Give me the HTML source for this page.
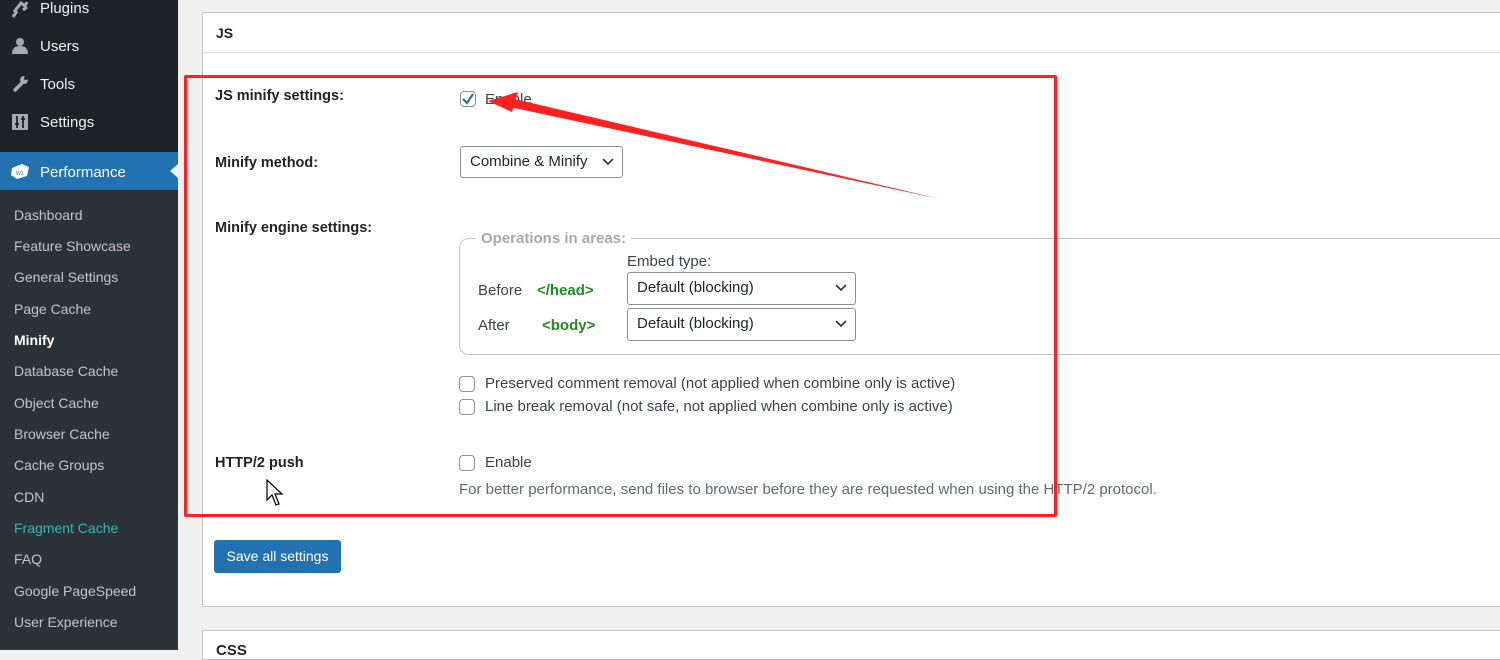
<!DOCTYPE html>
<html><head><style>
*{margin:0;padding:0;box-sizing:border-box}
body{width:1500px;height:650px;overflow:hidden;background:#f0f0f1;font-family:"Liberation Sans",sans-serif;font-size:15px;color:#1d2327;position:relative}
.a{position:absolute;white-space:nowrap}
#sb{position:absolute;left:0;top:0;width:178px;height:650px;background:#1d2327}
#sub{position:absolute;left:0;top:190px;width:178px;height:460px;background:#2c3338}
.m{position:absolute;left:40px;color:#f0f0f1;font-size:15px}
.s{position:absolute;left:14px;color:#c3c4c7;font-size:14px}
.panel{position:absolute;left:202px;top:12px;width:1310px;height:595px;background:#fff;border:1px solid #c3c4c7}
.lbl{font-weight:bold;font-size:14.5px}
.cb{position:absolute;width:16px;height:16px;border:1px solid #8c8f94;border-radius:4px;background:#fff}
.sel{position:absolute;border:1px solid #8c8f94;border-radius:3px;background:#fff;font-size:15px;padding-left:9px;line-height:30px}
.sel svg{position:absolute;right:8px;top:10px}
.g{color:#228b22;font-weight:bold}
</style></head><body>
<div id="sb"></div><div id="sub"></div>
<svg class="a" style="left:11px;top:0" width="18" height="18"><path d="M3 12 L10 3 L14 6 L16 2 M12 10 L16 7 M6 11 L2 17" stroke="#a7aaad" stroke-width="3" fill="none"/></svg>
<div class="m" style="top:0">Plugins</div>
<svg class="a" style="left:11px;top:37px" width="18" height="18"><circle cx="9" cy="5" r="4" fill="#a7aaad"/><path d="M1 17 Q1 9 9 9 Q17 9 17 17Z" fill="#a7aaad"/></svg>
<div class="m" style="top:38px">Users</div>
<svg class="a" style="left:11px;top:75px" width="18" height="18"><path d="M3 16 L11 8" stroke="#a7aaad" stroke-width="3.5"/><circle cx="13" cy="5" r="4" fill="#a7aaad"/><circle cx="15" cy="3" r="2" fill="#1d2327"/></svg>
<div class="m" style="top:76px">Tools</div>
<svg class="a" style="left:11px;top:113px" width="18" height="18"><rect x="1" y="1" width="16" height="16" fill="#a7aaad"/><path d="M6 3V15M12 3V15M4 11H8M10 6H14" stroke="#1d2327" stroke-width="1.8"/></svg>
<div class="m" style="top:114px">Settings</div>
<div class="a" style="left:0;top:152px;width:178px;height:38px;background:#2271b1"></div>
<div class="a" style="left:170px;top:164px;border:7px solid transparent;border-right-color:#f0f0f1;border-left:0;width:0;height:0;border-right-width:8px"></div>
<svg class="a" style="left:10px;top:162px" width="20" height="18"><path d="M2 6 L12 2 L19 5 L17 14 L7 17 L1 13Z" fill="#fff"/><text x="6" y="13" font-size="5" fill="#2271b1">W3</text></svg>
<div class="m" style="top:164px;color:#fff">Performance</div>
<div class="s" style="top:207px">Dashboard</div>
<div class="s" style="top:238px">Feature Showcase</div>
<div class="s" style="top:269px">General Settings</div>
<div class="s" style="top:301px">Page Cache</div>
<div class="s" style="top:332px;color:#fff;font-weight:bold">Minify</div>
<div class="s" style="top:363px">Database Cache</div>
<div class="s" style="top:395px">Object Cache</div>
<div class="s" style="top:426px">Browser Cache</div>
<div class="s" style="top:457px">Cache Groups</div>
<div class="s" style="top:489px">CDN</div>
<div class="s" style="top:520px;color:#3cb4b4">Fragment Cache</div>
<div class="s" style="top:551px">FAQ</div>
<div class="s" style="top:583px">Google PageSpeed</div>
<div class="s" style="top:614px">User Experience</div>

<div class="panel"></div>
<div class="a" style="left:203px;top:52px;width:1300px;height:1px;background:#dcdcde"></div>
<div class="a" style="left:216px;top:25px;font-size:14px;font-weight:bold">JS</div>
<div class="a" style="left:202px;top:630px;width:1310px;height:30px;background:#fff;border:1px solid #c3c4c7"></div>
<div class="a" style="left:216px;top:642px;font-weight:bold">CSS</div>

<div class="a lbl" style="left:215px;top:88px">JS minify settings:</div>
<div class="cb" style="left:460px;top:91px"></div>
<svg class="a" style="left:461px;top:92px" width="14" height="14"><path d="M2 7 L6 11 L12 2" stroke="#2271b1" stroke-width="2.2" fill="none"/></svg>
<div class="a" style="left:485px;top:91px;color:#3c434a">Enable</div>
<div class="a lbl" style="left:215px;top:155px">Minify method:</div>
<div class="sel" style="left:460px;top:146px;width:163px;height:32px">Combine &amp; Minify<svg width="12" height="10"><path d="M1 2 L6 7 L11 2" stroke="#333" stroke-width="1.6" fill="none"/></svg></div>
<div class="a lbl" style="left:215px;top:220px">Minify engine settings:</div>
<div class="a" style="left:459px;top:238px;width:1060px;height:117px;border:1px solid #c3c4c7;border-radius:10px"></div>
<div class="a" style="left:476px;top:230px;background:#fff;padding:0 5px;color:#a7aaad;font-weight:bold">Operations in areas:</div>
<div class="a" style="left:627px;top:253px;color:#3c434a">Embed type:</div>
<div class="a" style="left:478px;top:282px;color:#3c434a">Before</div>
<div class="a g" style="left:537px;top:282px">&lt;/head&gt;</div>
<div class="a" style="left:478px;top:317px;color:#3c434a">After</div>
<div class="a g" style="left:542px;top:317px">&lt;body&gt;</div>
<div class="sel" style="left:627px;top:272px;width:229px;height:33px">Default (blocking)<svg width="12" height="10"><path d="M1 2 L6 7 L11 2" stroke="#333" stroke-width="1.6" fill="none"/></svg></div>
<div class="sel" style="left:627px;top:308px;width:229px;height:33px">Default (blocking)<svg width="12" height="10"><path d="M1 2 L6 7 L11 2" stroke="#333" stroke-width="1.6" fill="none"/></svg></div>
<div class="cb" style="left:459px;top:376px"></div>
<div class="a" style="left:485px;top:375px;color:#3c434a">Preserved comment removal (not applied when combine only is active)</div>
<div class="cb" style="left:459px;top:399px"></div>
<div class="a" style="left:485px;top:398px;color:#3c434a">Line break removal (not safe, not applied when combine only is active)</div>
<div class="a lbl" style="left:215px;top:455px">HTTP/2 push</div>
<div class="cb" style="left:459px;top:455px"></div>
<div class="a" style="left:485px;top:454px;color:#3c434a">Enable</div>
<div class="a" style="left:459px;top:481px;color:#646970">For better performance, send files to browser before they are requested when using the HTTP/2 protocol.</div>
<div class="a" style="left:214px;top:540px;width:127px;height:33px;background:#2271b1;border-radius:3px;color:#fff;line-height:33px;text-align:center;font-size:14px">Save all settings</div>

<div class="a" style="left:184px;top:75px;width:873px;height:442px;border:3px solid #ff2020;border-radius:2px"></div>
<svg class="a" style="left:0;top:0" width="1500" height="650"><path d="M940 199 L505 106 L506 97 Z" fill="#ff2020"/><path d="M488 101 L518 92 L512 112Z" fill="#ff2020"/>
<path d="M267 480 L267 500 L272 495 L276 505 L279 504 L275 494 L282 494Z" fill="#fff" stroke="#000" stroke-width="1.2"/></svg>
</body></html>
